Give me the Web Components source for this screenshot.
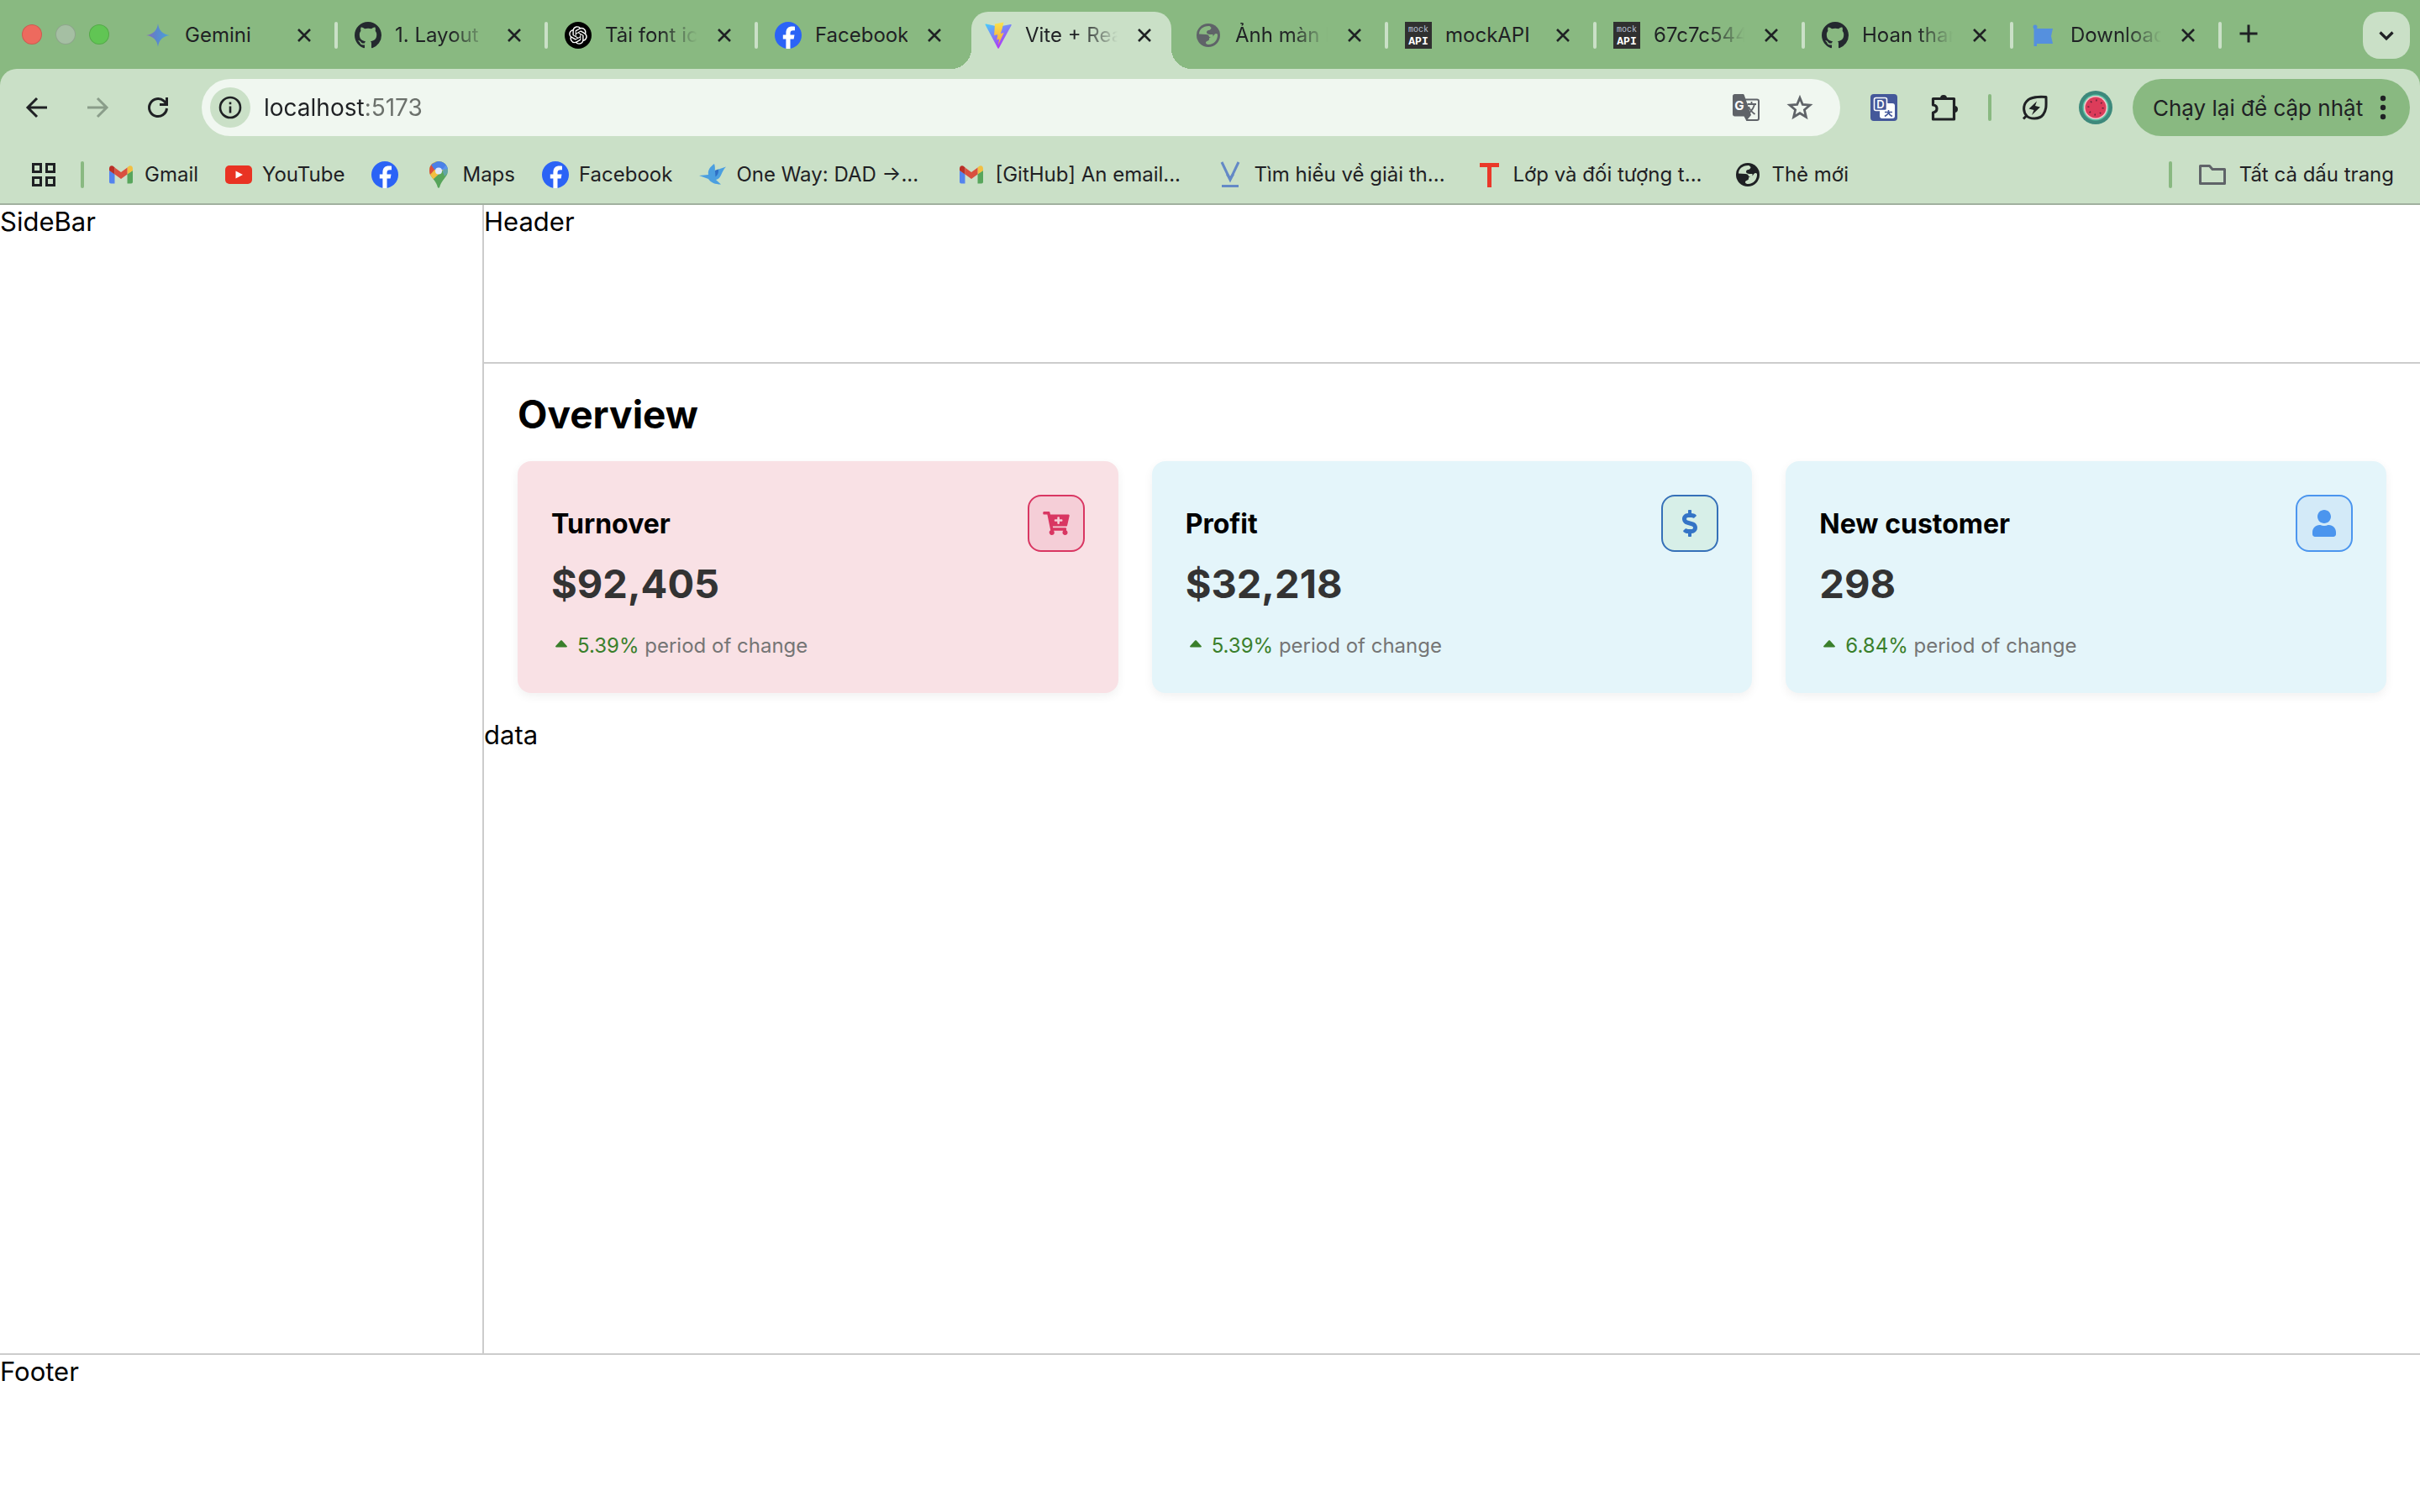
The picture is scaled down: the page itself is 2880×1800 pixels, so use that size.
<!DOCTYPE html>
<html lang="vi">
<head>
<meta charset="utf-8">
<title>Vite + React</title>
<style>
  html, body { margin: 0; }
  body { font-family: Inter, "Liberation Sans", sans-serif; color: #000; background: #fff; }
</style>
</head>
<body>
<browser-window>
  <tab-strip slot="tabs">
    <browser-tab icon="gemini">Gemini</browser-tab>
    <browser-tab icon="github" fade>1. Layout</browser-tab>
    <browser-tab icon="openai" fade>Tải font ico</browser-tab>
    <browser-tab icon="facebook" last>Facebook</browser-tab>
    <browser-tab icon="vite" fade active last>Vite + React</browser-tab>
    <browser-tab icon="globe" fade muted>Ảnh màn h</browser-tab>
    <browser-tab icon="mockapi" narrow>mockAPI</browser-tab>
    <browser-tab icon="mockapi" narrow fade>67c7c544</browser-tab>
    <browser-tab icon="github" narrow fade>Hoan than</browser-tab>
    <browser-tab icon="flag" narrow fade>Download</browser-tab>
  </tab-strip>
  <tool-bar slot="toolbar" url="localhost:5173">Chạy lại để cập nhật</tool-bar>
  <bookmark-bar slot="bookmarks">
    <book-mark icon="gmail">Gmail</book-mark>
    <book-mark icon="youtube">YouTube</book-mark>
    <book-mark icon="facebook" label="Facebook"></book-mark>
    <book-mark icon="maps">Maps</book-mark>
    <book-mark icon="facebook">Facebook</book-mark>
    <book-mark icon="bird" cut>One Way: DAD →...</book-mark>
    <book-mark icon="gmail" cut>[GitHub] An email...</book-mark>
    <book-mark icon="vee" cut>Tìm hiểu về giải th...</book-mark>
    <book-mark icon="tee" cut>Lớp và đối tượng t...</book-mark>
    <book-mark icon="globe">Thẻ mới</book-mark>
    <book-mark slot="end" icon="folder">Tất cả dấu trang</book-mark>
  </bookmark-bar>
  <app-layout>
    <span slot="sidebar">SideBar</span>
    <span slot="header">Header</span>
    <over-view heading="Overview">
      <stat-card tone="pink" icon="cart">Turnover
        <span slot="value">$92,405</span><span slot="change">5.39%</span>
      </stat-card>
      <stat-card tone="green" icon="dollar">Profit
        <span slot="value">$32,218</span><span slot="change">5.39%</span>
      </stat-card>
      <stat-card tone="blue" icon="user">New customer
        <span slot="value">298</span><span slot="change">6.84%</span>
      </stat-card>
    </over-view>
    <span>data</span>
    <span slot="footer">Footer</span>
  </app-layout>
</browser-window>

<script>
const FB = '<circle cx="16" cy="16" r="16" fill="#2b63f6"/><path fill="#fff" d="M13.4 32V20.6H9.8v-5h3.6v-2.3c0-5.4 2.5-7.9 7.6-7.9 1 0 2.200.2 3 .4v4.500c-.5-.1-1.100-.1-1.900-.1-2.600 0-3.600 1-3.600 3.600v1.800h5l-.9 5h-4.100V32z"/>';
const ICONS = {
  gemini: ['0 0 32 32', '<defs><linearGradient id="g" x1="0" y1="0" x2="1" y2="0"><stop offset="0" stop-color="#8d6cb4"/><stop offset=".4" stop-color="#5c85cd"/><stop offset="1" stop-color="#4aa3d8"/></linearGradient></defs><path fill="url(#g)" d="M16 2c.8 8 6 13.200 14 14-8 .8-13.200 6-14 14-.8-8-6-13.200-14-14 8-.8 13.200-6 14-14z"/>'],
  github: ['0 0 16 16', '<path fill="#24292f" d="M8 0C3.580 0 0 3.580 0 8c0 3.540 2.290 6.530 5.470 7.590.4.070.55-.17.55-.38 0-.19-.01-.82-.01-1.490-2.010.37-2.530-.49-2.690-.94-.09-.23-.48-.94-.82-1.130-.28-.15-.68-.52-.01-.53.63-.01 1.080.58 1.230.82.72 1.210 1.870.87 2.330.66.07-.52.28-.87.51-1.070-1.780-.2-3.640-.89-3.640-3.950 0-.87.31-1.590.82-2.150-.08-.2-.36-1.020.08-2.120 0 0 .67-.21 2.200.82.64-.18 1.320-.27 2-.27s1.360.09 2 .27c1.530-1.040 2.200-.82 2.200-.82.44 1.100.16 1.920.08 2.120.51.56.82 1.270.82 2.150 0 3.070-1.870 3.750-3.650 3.950.29.25.54.73.54 1.480 0 1.070-.01 1.930-.01 2.200 0 .21.15.46.55.38A8.010 8.010 0 0 0 16 8c0-4.420-3.580-8-8-8z"/>'],
  openai: ['0 0 32 32', '<circle cx="16" cy="16" r="16" fill="#000"/><path transform="translate(5.200 5.200) scale(.9)" fill="#fff" d="M22.2819 9.8211a5.9847 5.9847 0 0 0-.5157-4.9108 6.0462 6.0462 0 0 0-6.5098-2.9A6.0651 6.0651 0 0 0 4.9807 4.1818a5.9847 5.9847 0 0 0-3.9977 2.9 6.0462 6.0462 0 0 0 .7427 7.0966 5.98 5.98 0 0 0 .511 4.9107 6.051 6.051 0 0 0 6.5146 2.9001A5.9847 5.9847 0 0 0 13.2599 24a6.0557 6.0557 0 0 0 5.7718-4.2058 5.9894 5.9894 0 0 0 3.9977-2.9001 6.0557 6.0557 0 0 0-.7475-7.0729zm-9.022 12.6081a4.4755 4.4755 0 0 1-2.8764-1.0408l.1419-.0804 4.7783-2.7582a.7948.7948 0 0 0 .3927-.6813v-6.7369l2.02 1.1686a.071.071 0 0 1 .038.052v5.5826a4.504 4.504 0 0 1-4.4945 4.4944zm-9.6607-4.1254a4.4708 4.4708 0 0 1-.5346-3.0137l.142.0852 4.783 2.7582a.7712.7712 0 0 0 .7806 0l5.8428-3.3685v2.3324a.0804.0804 0 0 1-.0332.0615L9.74 19.9502a4.4992 4.4992 0 0 1-6.1408-1.6464zM2.3408 7.8956a4.485 4.485 0 0 1 2.3655-1.9728V11.6a.7664.7664 0 0 0 .3879.6765l5.8144 3.3543-2.0201 1.1685a.0757.0757 0 0 1-.071 0l-4.8303-2.7865A4.504 4.504 0 0 1 2.3408 7.872zm16.5963 3.8558L13.1038 8.364 15.1192 7.2a.0757.0757 0 0 1 .071 0l4.8303 2.7913a4.4944 4.4944 0 0 1-.6765 8.1042v-5.6772a.79.79 0 0 0-.407-.667zm2.0107-3.0231l-.142-.0852-4.7735-2.7818a.7759.7759 0 0 0-.7854 0L9.409 9.2297V6.8974a.0662.0662 0 0 1 .0284-.0615l4.8303-2.7866a4.4992 4.4992 0 0 1 6.6802 4.66zM8.3065 12.863l-2.02-1.1638a.0804.0804 0 0 1-.038-.0567V6.0742a4.4992 4.4992 0 0 1 7.3757-3.4537l-.142.0805L8.704 5.459a.7948.7948 0 0 0-.3927.6813zm1.0976-2.3654l2.602-1.4998 2.6069 1.4998v2.9994l-2.5974 1.4997-2.6067-1.4997z"/>'],
  facebook: ['0 0 32 32', FB],
  vite: ['0 0 32 32', '<defs><linearGradient id="a" x1="0" y1="0" x2=".6" y2="1"><stop offset="0" stop-color="#45d0fb"/><stop offset="1" stop-color="#b82ff5"/></linearGradient><linearGradient id="b" x1="0" y1="0" x2="0" y2="1"><stop offset="0" stop-color="#fbe34d"/><stop offset="1" stop-color="#f2a63c"/></linearGradient></defs><path fill="url(#a)" d="M.6 3.500 15.500 31.400c.3.500.9.500 1.200 0L31.600 4.200c.3-.6-.2-1.200-.8-1.100L16.300 5.800 1.500 2.500c-.7-.1-1.200.5-.9 1z"/><path fill="url(#b)" d="M22.500.5 12 2.500l-.9 13.500 4.200-.8-1 6.200 2.900-.8-1.300 6.900 6.800-14.400-4 .8 1.900-5.400z"/>'],
  globe: ['0 0 32 32', '<circle cx="16" cy="16" r="14" fill="currentColor"/><path fill="var(--hole)" d="M17.500 5C10 4.500 5 9 5 14.500l8 .5c2.500 0 4 1 4 3h4.500v-3H18c-2.500 0-4-1-4-2.500s1-2.500 2.500-2.500 3-1.500 3-3z"/><path fill="var(--hole)" d="M27 15c.5 6.500-4.500 12-10.500 12-1.500 0-3.500-.5-3.500-2s1-2 2.500-2.500 1.500-1.500 1.500-2.500 1-2 2.500-2 2.500-1 3.500-2.500 3-2 4-.5z"/>'],
  mockapi: ['0 0 32 32', '<path fill="#303030" d="M0 0h32v32H0z"/><text x="16" y="12" text-anchor="middle" font-family="Liberation Mono" font-size="10" fill="#b9c3d6">mock</text><text x="16" y="27" text-anchor="middle" font-family="Liberation Mono" font-weight="700" font-size="13" fill="#fff">API</text>'],
  flag: ['0 0 32 32', '<g fill="#5590de"><circle cx="6" cy="6" r="2.500"/><path d="M4.500 7H8v22H4.500z"/><path d="M6 8h21l-2 9 2 9H6z"/></g>'],
  gmail: ['0 0 32 32', '<path fill="#5484ee" d="M2 11v13.500c0 1.200.8 2 2 2h4.500V15z"/><path fill="#58a65c" d="M30 11v13.500c0 1.200-.8 2-2 2h-4.500V15z"/><path fill="#f2bf42" d="M23.500 7.500v8L30 11V8.500c0-3-3-4.200-5-2.600z"/><path fill="#d9503f" d="M8.500 15.500v-8L16 13l7.500-5.500v8L16 21z"/><path fill="#ba3027" d="M2 8.500V11l6.500 4.500v-8L7 5.900C5 4.300 2 5.500 2 8.500z"/>'],
  youtube: ['0 0 32 32', '<rect y="5" width="32" height="22" rx="5" fill="#e93323"/><path fill="#fff" d="m12.500 11.500 8.500 4.500-8.500 4.500z"/>'],
  maps: ['0 0 32 32', '<defs><clipPath id="p"><path d="M16 0C9.500 0 5 5 5 11.200c0 4.500 2.600 7.300 5.500 11 2.300 3 3.500 5.500 4.300 8.500.4 1.500 2 1.500 2.400 0 .8-3 2-5.500 4.300-8.500 2.900-3.700 5.500-6.500 5.500-11C27 5 22.500 0 16 0z"/></clipPath></defs><g clip-path="url(#p)"><path fill="#57a55a" d="M0 0h32v32H0z"/><path fill="#f2bf42" d="M0 21 20 0h-8L0 8zM0 30 22 10l-6-4L0 14z"/><path fill="#d9503f" d="M0 0h8l5 8L4 18H0z"/><path fill="#4a80e8" d="M7 4 16-1h12v10l-8 1-4 1-5-1z"/><path fill="#6ba5f0" d="m20 10 5-6 4 8-6 6z" opacity=".5"/></g><circle cx="16" cy="11.500" r="4" fill="#dfeafc"/>'],
  bird: ['0 0 32 32', '<path fill="#4b9fe0" d="M18 3c1 3 1 5 .8 8L32 6.500c-2.500 2.500-4 5.500-5.500 9-1.500 3.800-3.500 6-6.500 6.500l6 5.500c-7 0-12-2-15-6.500L0 17l11-1C10 10 13.500 6.500 18 3z"/><path fill="#2f6fc4" d="m19 11 4-1.500c.5 4-1 7-3.500 9z"/>'],
  vee: ['0 0 32 32', '<path fill="none" stroke="#6489c6" stroke-width="3" d="m6 1 10 21L26 1"/><path fill="#6489c6" d="m11 16 5 8 5-8-3-1-2 3-2-3zM6 28h20v3H6z"/>'],
  tee: ['0 0 32 32', '<path fill="#ea3829" d="M5 2h23v5h-9v24h-5V7H5z"/>'],
  folder: ['0 0 32 32', '<path fill="none" stroke="#5f6368" stroke-width="3" stroke-linejoin="round" d="M1.500 8v18.500h29V9.500H16L12.500 5.500h-11z"/>'],
  apps: ['0 0 32 32', '<path fill="none" stroke="#1f2124" stroke-width="3" d="M3.500 3.500h9v9h-9zM19.500 3.500h9v9h-9zM3.500 19.500h9v9h-9zM19.500 19.500h9v9h-9z"/>'],
  back: ['0 0 32 32', '<path fill="none" stroke="currentColor" stroke-width="3" d="M28 16H5.500M16 5 5 16l11 11"/>'],
  forward: ['0 0 32 32', '<path fill="none" stroke="currentColor" stroke-width="3" d="M4 16h22.500M16 5l11 11-11 11"/>'],
  reload: ['0 0 32 32', '<path fill="none" stroke="currentColor" stroke-width="3" d="M26.500 17A10.500 10.500 0 1 1 23 8.200l3 3"/><path fill="none" stroke="currentColor" stroke-width="3" d="M26.500 4v8.500H18"/>'],
  info: ['0 0 32 32', '<circle cx="16" cy="16" r="12" fill="none" stroke="#1f2124" stroke-width="2.600"/><path fill="#1f2124" d="M14.700 14.500h2.600v8h-2.600zM14.700 9.500h2.600v2.800h-2.600z"/>'],
  translate: ['0 0 32 32', '<path fill="none" stroke="#5f6368" stroke-width="2" d="M14 6.500h15c1.200 0 2 .8 2 2V29c0 1.200-.8 2-2 2H17l-3-6"/><path fill="#5f6368" d="M2.500 0H12c1 0 1.500.4 1.800 1.200L22 25l-5 6-3-4.500H2.500C1 26.500 0 25.500 0 24V2.500C0 1 1 0 2.500 0z"/><text x="8" y="19" text-anchor="middle" font-family="Inter" font-size="15" font-weight="700" fill="#fff">G</text><path fill="none" stroke="#5f6368" stroke-width="1.800" d="M17.500 12H28M22.500 9v3M26 12c-1 5-3.500 8-7 11M19 15c1.500 4 4 6.500 7.500 9"/>'],
  star: ['0 0 32 32', '<path fill="none" stroke="#5f6368" stroke-width="2.800" d="m16 4.500 3.300 8 8.700.7-6.600 5.600 2 8.400L16 22.700l-7.400 4.500 2-8.400L4 13.200l8.700-.7z"/>'],
  dict: ['0 0 32 32', '<rect width="32" height="32" rx="4" fill="#44589a"/><rect x="11" y="11" width="18" height="18" rx="3" fill="#fff"/><rect x="4.500" y="4.500" width="15" height="15" rx="2" fill="#44589a" stroke="#fff" stroke-width="1.600"/><text x="12" y="17" text-anchor="middle" font-family="Inter" font-size="13" font-weight="600" fill="#fff">D</text><path fill="none" stroke="#44589a" stroke-width="1.600" d="M17 21.500h9M21.500 19v2.500c0 2-2 3.500-4.500 5M21.500 21.500c.5 2.500 2 4 4.500 5"/>'],
  puzzle: ['0 0 32 32', '<path fill="none" stroke="#1f2124" stroke-width="3.200" stroke-linejoin="round" d="M2.500 5.500h25V30h-25v-8c6-1 6-8.500 0-9z"/><path fill="#1f2124" d="M11 5a4 4 0 0 1 8 0zM28 14a4 4 0 0 1 0 8z"/>'],
  leaf: ['0 0 32 32', '<path fill="none" stroke="#1f2124" stroke-width="3" stroke-linejoin="round" d="M29 3.500C20 3 11 3 6 8.500S2 22 6 26s15 4.500 19.500-1.500S29 12 29 3.500zM2 29.500 6.500 25"/><path fill="#1f2124" d="M18 8.500 8.500 17.500l6 1.500-2.500 6 10-9.500-6-1.500z"/>'],
  melon: ['0 0 40 40', '<circle cx="20" cy="20" r="20" fill="#3d897c"/><circle cx="20" cy="20" r="15.500" fill="#5cc4a6"/><circle cx="20" cy="20" r="14" fill="#f3c9cd"/><circle cx="20" cy="20" r="12.500" fill="#dc3c5a"/><circle cx="20" cy="20" r="8.600" fill="none" stroke="#5a2238" stroke-width="2" stroke-dasharray="1.400 5.354"/>'],
  kebab: ['0 0 8 32', '<g fill="#1f2124"><circle cx="4" cy="5" r="3.200"/><circle cx="4" cy="16" r="3.200"/><circle cx="4" cy="27" r="3.200"/></g>'],
  close: ['0 0 16 16', '<path fill="none" stroke="#1f2124" stroke-width="2.600" d="m1 1 14 14M15 1 1 15"/>'],
  plus: ['0 0 32 32', '<path fill="none" stroke="#1f2124" stroke-width="3" d="M16 5.500v21M5.500 16h21"/>'],
  chevron: ['0 0 32 32', '<path fill="none" stroke="#1f2124" stroke-width="3.200" d="m8.500 12.500 7.500 7.500 7.500-7.500"/>'],
  caret: ['0 0 24 24', '<path fill="#3a7f2b" d="M11.200 5.600 5.300 12c-.5.700-.2 1.500.7 1.500h12c.9 0 1.200-.8.7-1.500l-5.900-6.400c-.5-.5-1.100-.5-1.600 0z"/>'],
  cart: ['0 0 576 512', '<path fill="currentColor" d="M504.717 320H211.572l6.545 32h268.418c15.401 0 26.816 14.301 23.403 29.319l-5.517 24.276C523.112 414.668 536 433.828 536 456c0 31.202-25.519 56.444-56.824 55.994-29.823-.429-54.35-24.631-55.155-54.447-.44-16.287 6.085-31.049 16.803-41.548H231.176C241.553 426.165 248 440.326 248 456c0 31.813-26.528 57.431-58.67 55.938-28.54-1.325-51.751-24.385-53.251-52.917-1.158-22.034 10.436-41.455 28.051-51.586L93.883 64H24C10.745 64 0 53.255 0 40V24C0 10.745 10.745 0 24 0h102.529c11.401 0 21.228 8.021 23.513 19.19L159.208 64H551.99c15.401 0 26.816 14.301 23.403 29.319l-47.273 208C525.637 312.246 515.923 320 504.717 320zM408 168h-48v-40c0-8.837-7.163-16-16-16h-16c-8.837 0-16 7.163-16 16v40h-48c-8.837 0-16 7.163-16 16v16c0 8.837 7.163 16 16 16h48v40c0 8.837 7.163 16 16 16h16c8.837 0 16-7.163 16-16v-40h48c8.837 0 16-7.163 16-16v-16c0-8.837-7.163-16-16-16z"/>'],
  dollar: ['0 0 288 512', '<path fill="currentColor" d="M209.2 233.4l-108-31.6C88.7 198.2 80 186.5 80 173.5c0-16.3 13.2-29.5 29.5-29.5h66.3c12.2 0 24.2 3.7 34.2 10.5 6.1 4.1 14.3 3.1 19.5-2l34.8-34c7.1-6.9 6.1-18.4-1.8-24.5C238 74.8 207.4 64.1 176 64V16c0-8.8-7.2-16-16-16h-32c-8.8 0-16 7.2-16 16v48h-2.5C45.8 64-5.4 118.7.5 183.6c4.200 46.1 39.4 83.6 83.8 96.6l102.5 30c12.5 3.7 21.2 15.3 21.2 28.3 0 16.3-13.2 29.5-29.5 29.5h-66.3C100 368 88 364.3 78 357.5c-6.1-4.1-14.3-3.1-19.5 2l-34.8 34c-7.1 6.9-6.1 18.4 1.8 24.5 24.5 19.2 55.1 29.9 86.5 30v48c0 8.8 7.2 16 16 16h32c8.8 0 16-7.2 16-16v-48.2c46.6-.9 90.3-28.6 105.7-72.7 21.5-61.6-14.6-124.8-72.5-141.7z"/>'],
  user: ['0 0 448 512', '<path fill="currentColor" d="M224 256c70.7 0 128-57.3 128-128S294.7 0 224 0 96 57.3 96 128s57.3 128 128 128zm89.6 32h-16.7c-22.2 10.2-46.9 16-72.9 16s-50.6-5.8-72.9-16h-16.7C60.2 288 0 348.2 0 422.4V464c0 26.5 21.5 48 48 48h352c26.500 0 48-21.5 48-48v-41.6c0-74.2-60.2-134.4-134.4-134.4z"/>']
};

function define(name, render) {
  customElements.define(name, class extends HTMLElement {
    connectedCallback() {
      if (this.shadowRoot) return;
      const tpl = document.createElement('template');
      tpl.innerHTML = render(this);
      this.attachShadow({ mode: 'open' }).append(tpl.content.cloneNode(true));
    }
  });
}

define('ui-icon', el => {
  const [box, art] = ICONS[el.getAttribute('name')];
  return `<style>
    :host { display: block; flex: none; width: 32px; height: 32px; }
    svg { display: block; width: 100%; height: 100%; }
  </style><svg viewBox="${box}" aria-hidden="true">${art}</svg>`;
});

define('browser-window', () => `<style>
    :host { display: flex; flex-direction: column; min-height: 100vh;
      --strip: #89b981; --bar: #cae0c7; --field: #f0f7f0; --ink: #1f2124; --hole: #cae0c7; }
    .chrome { background: var(--strip); color: var(--ink); }
    .bars { background: var(--bar); border-radius: 20px 20px 0 0; border-bottom: 2px solid #a1b09f; }
    ::slotted(app-layout) { flex: 1; }
  </style>
  <div class="chrome"><slot name="tabs"></slot>
    <div class="bars"><slot name="toolbar"></slot><slot name="bookmarks"></slot></div>
  </div><slot></slot>`);

define('tab-strip', () => `<style>
    :host { display: flex; height: 82px; padding: 0 12px 0 26px; }
    .lights { display: flex; align-items: center; gap: 16px; margin-right: 22px; }
    .lights i { width: 24px; height: 24px; border-radius: 50%; box-sizing: border-box; border: 1px solid #0002; background: #a5bfa3; }
    .lights .r { background: #ed6a5e; }
    .lights .g { background: #61c554; }
    button { border: 0; padding: 0; background: none; }
    .new { width: 32px; margin: 0 auto 2px 16px; }
    .more { display: grid; place-items: center; width: 56px; height: 56px; margin-top: 14px; border-radius: 20px; background: var(--bar); }
  </style>
  <div class="lights"><i class="r"></i><i></i><i class="g"></i></div>
  <slot></slot>
  <button class="new" aria-label="New tab"><ui-icon name="plus"></ui-icon></button>
  <button class="more" aria-label="Search tabs"><ui-icon name="chevron"></ui-icon></button>`);

define('browser-tab', el => `<style>
    :host { display: flex; flex: 0 1 250px; min-width: 0; }
    :host([narrow]) { flex-basis: 248px; }
    .body { position: relative; flex: 1; min-width: 0; display: flex; align-items: center; gap: 16px;
      margin: 14px 4px 0; padding: 0 16px 12px; border-radius: 20px 20px 0 0; }
    :host([active]) .body { background: var(--bar); }
    :host([active]) .body::before, :host([active]) .body::after {
      content: ""; position: absolute; bottom: 0; width: 24px; height: 24px; }
    :host([active]) .body::before { right: 100%; background: radial-gradient(circle at 0 0, transparent 24px, var(--bar) 24px); }
    :host([active]) .body::after { left: 100%; background: radial-gradient(circle at 100% 0, transparent 24px, var(--bar) 24px); }
    :host([muted]) ui-icon.fav { color: #5f6368; --hole: #89b981; }
    .title { flex: 1; min-width: 0; overflow: hidden; white-space: nowrap; font-size: 24px; line-height: 32px; }
    :host([fade]) .title { mask-image: linear-gradient(90deg, #000 60%, transparent); }
    button { display: grid; place-items: center; width: 32px; height: 32px; padding: 0; border: 0; background: none; }
    button ui-icon { width: 16px; height: 16px; }
    .sep { width: 4px; height: 32px; margin-top: 26px; border-radius: 2px; background: var(--bar); }
    :host([last]) .sep { visibility: hidden; }
  </style>
  <div class="body"><ui-icon class="fav" name="${el.getAttribute('icon')}"></ui-icon>
    <span class="title"><slot></slot></span>
    <button aria-label="Close tab"><ui-icon name="close"></ui-icon></button></div>
  <span class="sep"></span>`);

define('tool-bar', el => `<style>
    :host { display: flex; align-items: center; padding: 12px 12px 12px 8px; }
    button { display: grid; place-items: center; width: 72px; height: 68px; padding: 0; border: 0; background: none; color: inherit; font: inherit; }
    button[disabled] { color: #8a9d8a; }
    .field { flex: 1; display: flex; align-items: center; height: 68px; margin: 0 16px; padding: 0 16px 0 10px; border-radius: 34px; background: var(--field); }
    .field button { width: 64px; }
    .field .site { width: 48px; height: 48px; margin-right: 16px; border-radius: 50%; background: var(--bar); }
    input { flex: 1; min-width: 0; padding: 0; border: 0; outline: 0; font: 28px/40px Inter, sans-serif; color: #1f2124;
      background: linear-gradient(90deg, #1f2124 120px, #6b706b 120px) text; -webkit-text-fill-color: transparent; }
    .sep { width: 4px; height: 32px; margin: 0 16px; border-radius: 2px; background: var(--strip); }
    .melon { width: 40px; height: 40px; }
    .update { display: flex; align-items: center; justify-content: space-between; width: 330px; margin-left: 8px; padding: 0 28px 0 24px; border-radius: 34px; background: var(--strip); font-size: 26px; white-space: nowrap; }
    .update ui-icon { width: 8px; }
  </style>
  <button aria-label="Back"><ui-icon name="back"></ui-icon></button>
  <button aria-label="Forward" disabled><ui-icon name="forward"></ui-icon></button>
  <button aria-label="Reload"><ui-icon name="reload"></ui-icon></button>
  <div class="field">
    <button class="site" aria-label="Site information"><ui-icon name="info"></ui-icon></button>
    <input aria-label="Address" value="${el.getAttribute('url')}" spellcheck="false">
    <button aria-label="Translate"><ui-icon name="translate"></ui-icon></button>
    <button aria-label="Bookmark"><ui-icon name="star"></ui-icon></button>
  </div>
  <button aria-label="Dictionary"><ui-icon name="dict"></ui-icon></button>
  <button aria-label="Extensions"><ui-icon name="puzzle"></ui-icon></button>
  <span class="sep"></span>
  <button aria-label="Energy saver"><ui-icon name="leaf"></ui-icon></button>
  <button aria-label="Profile"><ui-icon class="melon" name="melon"></ui-icon></button>
  <button class="update"><slot></slot><ui-icon name="kebab"></ui-icon></button>`);

define('bookmark-bar', () => `<style>
    :host { display: flex; align-items: center; height: 68px; padding: 0 31px 0 36px; }
    nav { display: flex; align-items: center; gap: 32px; }
    .start { gap: 28px; }
    .end { margin-left: auto; }
    .sep { width: 4px; height: 32px; border-radius: 2px; background: var(--strip); }
    button { padding: 0; border: 0; background: none; }
  </style>
  <nav class="start"><button aria-label="Apps"><ui-icon name="apps"></ui-icon></button><span class="sep"></span>
    <nav><slot></slot></nav></nav>
  <nav class="end"><span class="sep"></span><slot name="end"></slot></nav>`);

define('book-mark', el => `<style>
    :host { display: block; flex: none; }
    a { display: flex; align-items: center; gap: 12px; color: inherit; text-decoration: none; font-size: 24px; line-height: 32px; white-space: nowrap; }
    :host([slot=end]) a { gap: 16px; }
    :host([label]) span { display: none; }
    :host([cut]) span { width: 232px; }
  </style><a href="#" aria-label="${el.getAttribute('label') || el.textContent}"><ui-icon name="${el.getAttribute('icon')}"></ui-icon><span><slot></slot></span></a>`);

define('app-layout', () => `<style>
    :host { display: flex; flex-direction: column; font-size: 31px; line-height: 40px; }
    .mid { flex: 1; display: flex; border-bottom: 2px solid #ccc; }
    aside { flex: 0 0 20%; box-sizing: border-box; border-right: 2px solid #ccc; }
    .col { flex: 1; min-width: 0; }
    header { min-height: 187px; border-bottom: 2px solid #ccc; }
    footer { min-height: 187px; }
  </style>
  <div class="mid"><aside><slot name="sidebar"></slot></aside>
    <div class="col"><header><slot name="header"></slot></header><main><slot></slot></main></div></div>
  <footer><slot name="footer"></slot></footer>`);

define('over-view', el => `<style>
    :host { display: block; padding: 24px 40px 30px; }
    h1 { margin: 0 0 20px; font-size: 46px; line-height: 72px; font-weight: 700; }
    .cards { display: grid; grid-template-columns: repeat(3, 1fr); gap: 40px; }
  </style><h1>${el.getAttribute('heading')}</h1><div class="cards"><slot></slot></div>`);

define('stat-card', el => `<style>
    :host { display: block; padding: 40px 40px 38px; border-radius: 16px; background: #e4f5fa; box-shadow: 0 4px 12px #0000000f; }
    :host([tone=pink]) { background: #f9e1e5; --c: #d93662; --b: #d93662; --f: #f5ced7; }
    :host([tone=green]) { --c: #3474c6; --b: #3570b8; --f: #d7efe8; }
    :host([tone=blue]) { --c: #4b95ee; --b: #4b95ee; --f: #d3eaf8; }
    .top { display: flex; align-items: center; justify-content: space-between; margin-bottom: 2px; }
    h2 { margin: 0; padding-top: 2px; font-size: 32px; line-height: 48px; font-weight: 700; }
    .badge { display: grid; place-items: center; box-sizing: border-box; width: 68px; height: 68px; border: 2px solid var(--b); border-radius: 16px; background: var(--f); color: var(--c); }
    :host([icon=cart]) .badge ui-icon { height: 28px; }
    .value { margin: 0 0 20px; font-size: 47px; line-height: 72px; font-weight: 700; color: #333; }
    .change { display: flex; align-items: center; margin: 0; font-size: 24px; line-height: 36px; color: #757575; white-space: pre; }
    .change ui-icon { width: 24px; height: 24px; margin-right: 7px; }
    .change b { font-weight: 400; color: #3a7f2b; }
  </style>
  <div class="top"><h2><slot></slot></h2><div class="badge"><ui-icon name="${el.getAttribute('icon')}"></ui-icon></div></div>
  <p class="value"><slot name="value"></slot></p>
  <p class="change"><ui-icon name="caret"></ui-icon><b><slot name="change"></slot></b><span> period of change</span></p>`);
</script>
</body>
</html>
